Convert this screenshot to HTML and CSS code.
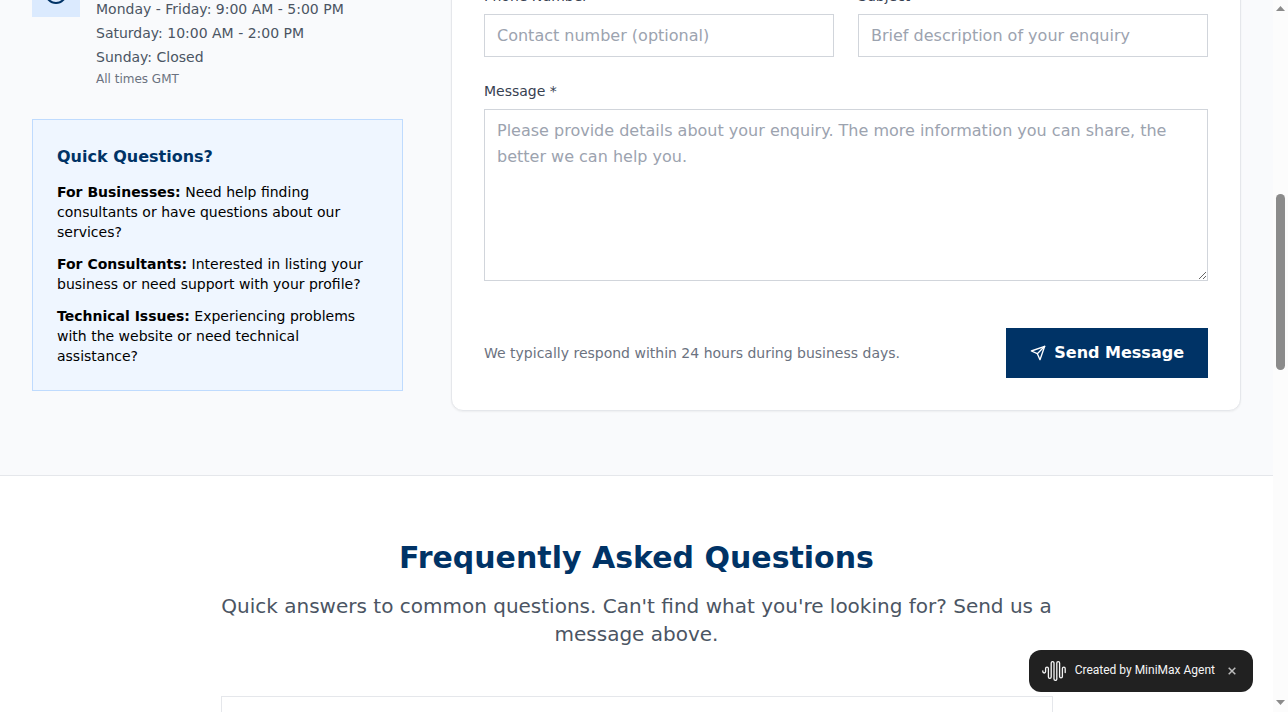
FILE: index.html
```html
<!DOCTYPE html>
<html lang="en">
<head>
<meta charset="utf-8">
<meta name="viewport" content="width=device-width, initial-scale=1">
<title>Contact</title>
<link rel="stylesheet" href="styles.css">
</head>
<body>
<main class="page">
  <section class="contact">
    <div class="contact-grid">
      <aside class="info">
        <div class="hours">
          <span class="hours-icon">
            <svg width="24" height="24" viewBox="0 0 24 24" fill="none" stroke="currentColor" stroke-width="2" stroke-linecap="round" stroke-linejoin="round" aria-hidden="true"><circle cx="12" cy="12" r="10"/><path d="M12 6v6l4 2"/></svg>
          </span>
          <div class="hours-text">
            <p>Monday - Friday: 9:00 AM - 5:00 PM</p>
            <p>Saturday: 10:00 AM - 2:00 PM</p>
            <p>Sunday: Closed</p>
            <p class="hours-note">All times GMT</p>
          </div>
        </div>
        <div class="quick">
          <h3>Quick Questions?</h3>
          <div class="quick-list">
            <p><strong>For Businesses:</strong> Need help finding consultants or have questions about our services?</p>
            <p><strong>For Consultants:</strong> Interested in listing your business or need support with your profile?</p>
            <p><strong>Technical Issues:</strong> Experiencing problems with the website or need technical assistance?</p>
          </div>
        </div>
      </aside>
      <form class="card">
        <div class="row">
          <div class="field">
            <label for="phone">Phone Number</label>
            <input id="phone" type="tel" placeholder="Contact number (optional)">
          </div>
          <div class="field">
            <label for="subject">Subject</label>
            <input id="subject" type="text" placeholder="Brief description of your enquiry">
          </div>
        </div>
        <div class="field">
          <label for="message">Message *</label>
          <textarea id="message" placeholder="Please provide details about your enquiry. The more information you can share, the better we can help you."></textarea>
        </div>
        <div class="actions">
          <p>We typically respond within 24 hours during business days.</p>
          <button type="submit" class="send">
            <svg width="16" height="16" viewBox="0 0 24 24" fill="none" stroke="currentColor" stroke-width="2" stroke-linecap="round" stroke-linejoin="round" aria-hidden="true"><path d="m22 2-7 20-4-9-9-4Z"/><path d="M22 2 11 13"/></svg>
            Send Message
          </button>
        </div>
      </form>
    </div>
  </section>
  <section class="faq">
    <div class="faq-inner">
      <h2>Frequently Asked Questions</h2>
      <p class="faq-lead">Quick answers to common questions. Can't find what you're looking for? Send us a message above.</p>
      <div class="faq-item"></div>
    </div>
  </section>
</main>
<div class="scrollbar" aria-hidden="true">
  <svg width="15" height="15" viewBox="0 0 15 15"><path d="M3 11 7.500 6 12 11Z" fill="#8b8b8b"/></svg>
  <div class="track">
    <span class="before"></span>
    <span class="thumb"></span>
    <span class="after"></span>
  </div>
  <svg width="15" height="15" viewBox="0 0 15 15"><path d="M3 3 7.500 8 12 3Z" fill="#8b8b8b"/></svg>
</div>
<div class="badge">
  <svg width="26" height="22" viewBox="0 0 26 22" fill="none" stroke="currentColor" stroke-width="1.300" stroke-linecap="round" aria-hidden="true"><path d="M1.800 10.800v.8a1.400 1.400 0 0 0 2.800 0V8.500a1.400 1.400 0 0 1 2.800 0v8.400a1.400 1.400 0 0 0 2.800 0V3a1.400 1.400 0 0 1 2.800 0v16a1.400 1.400 0 0 0 2.800 0V3a1.400 1.400 0 0 1 2.800 0v13.400a1.400 1.400 0 0 0 2.800 0V8.500a1.400 1.400 0 0 1 2.800 0v4"/></svg>
  <span class="badge-text">Created by MiniMax Agent</span>
  <button type="button" class="close" aria-label="Close">
    <svg width="8" height="8" viewBox="0 0 8 8" stroke="currentColor" stroke-width="1.500" aria-hidden="true"><path d="M.7.700l6.600 6.600M7.300.700.700 7.300"/></svg>
  </button>
</div>
</body>
</html>
```

FILE: styles.css
```css
*, *::before, *::after { box-sizing: border-box; }

body {
  margin: 0;
  height: 100vh;
  overflow: hidden;
  display: grid;
  grid-template-columns: minmax(0, 1fr) 15px;
  font-family: "DejaVu Sans", sans-serif;
  font-size: 16px;
  color: #000;
  background: #fff;
}

h2, h3, p { margin: 0; }
svg { display: block; flex: none; }

.page {
  height: 100vh;
  overflow: hidden;
}

.contact {
  margin-top: -31px;
  padding-bottom: 64px;
  background: #f9fafc;
}

.contact-grid {
  max-width: 1280px;
  margin: 0 auto;
  padding: 0 32px;
  display: grid;
  grid-template-columns: repeat(3, minmax(0, 1fr));
  gap: 48px;
  align-items: start;
}

.info {
  display: flex;
  flex-direction: column;
  gap: 32px;
}

.hours {
  display: flex;
  align-items: flex-start;
  gap: 16px;
}

.hours-icon {
  display: flex;
  padding: 12px;
  background: #dbeafe;
  color: #003366;
}

.hours-text {
  padding-top: 28px;
  font-size: 14px;
  line-height: 24px;
  color: #4b5563;
}

.hours-text .hours-note {
  margin-top: 2px;
  font-size: 12px;
  line-height: 16px;
  color: #6b7280;
}

.quick {
  padding: 24px;
  border: 1px solid #bfdbfe;
  background: #eff6ff;
}

.quick h3 {
  margin-bottom: 12px;
  font-size: 16px;
  line-height: 26px;
  color: #003366;
}

.quick-list {
  display: flex;
  flex-direction: column;
  gap: 12px;
  font-size: 14px;
  line-height: 20px;
}

.card {
  grid-column: span 2;
  padding: 16px 32px 32px;
  border: 1px solid #e5e7eb;
  border-radius: 12px;
  background: #fff;
  box-shadow: 0 1px 2px rgba(0, 0, 0, 0.05);
  display: flex;
  flex-direction: column;
  gap: 24px;
}

.row {
  display: grid;
  grid-template-columns: repeat(2, minmax(0, 1fr));
  gap: 24px;
}

.field {
  display: flex;
  flex-direction: column;
  gap: 8px;
}

.field label {
  font-size: 14px;
  line-height: 20px;
  color: #374151;
}

.field input,
.field textarea {
  width: 100%;
  margin: 0;
  padding: 8px 12px;
  border: 1px solid #d1d5db;
  border-radius: 0;
  background: #fff;
  font: inherit;
  line-height: 26px;
  color: #111827;
  outline: 0;
}

.field input { height: 43px; }

.field textarea {
  height: 172px;
  resize: vertical;
}

.field ::placeholder {
  color: #9ca3af;
  opacity: 1;
}

.actions {
  padding-top: 23px;
  display: flex;
  align-items: center;
  justify-content: space-between;
}

.actions p {
  font-size: 14px;
  line-height: 20px;
  color: #6b7280;
}

.send {
  display: flex;
  align-items: center;
  gap: 8px;
  padding: 12px 24px;
  border: 0;
  background: #003366;
  color: #fff;
  font: inherit;
  font-weight: 700;
  line-height: 26px;
}

.faq {
  padding: 64px 0;
  border-top: 1px solid #e5e7eb;
  background: #fff;
}

.faq-inner {
  max-width: 896px;
  margin: 0 auto;
  padding: 0 32px;
  text-align: center;
}

.faq h2 {
  margin-bottom: 16px;
  font-size: 30px;
  line-height: 36px;
  color: #003366;
}

.faq-lead {
  margin-bottom: 48px;
  font-size: 20px;
  line-height: 28px;
  color: #4b5563;
}

.faq-item {
  min-height: 76px;
  border: 1px solid #e5e7eb;
}

.scrollbar {
  height: 100vh;
  display: flex;
  flex-direction: column;
  background: #fcfcfc;
}

.track {
  flex: 1;
  padding: 0 3px;
  display: flex;
  flex-direction: column;
}

.before { flex: 179; }
.thumb { flex: 176; border-radius: 5px; background: #8b8b8b; }
.after { flex: 327; }

.badge {
  position: fixed;
  right: 35px;
  bottom: 20px;
  height: 42px;
  padding: 0 12px;
  display: flex;
  align-items: center;
  gap: 8px;
  border-radius: 12px;
  background: #212121;
  color: #f5f5f5;
  font-family: Roboto, sans-serif;
  font-size: 12px;
  font-weight: 400;
  line-height: 16px;
}

.badge-text { padding-bottom: 2px; }

.close {
  display: flex;
  padding: 4px 5px;
  border: 0;
  background: transparent;
  color: #bdbdbd;
}
```
